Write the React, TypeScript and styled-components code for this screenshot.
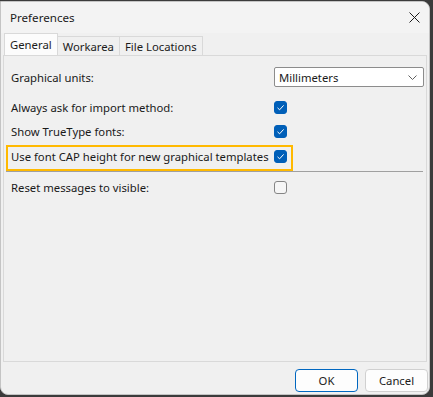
import React from "react";
import styled, { createGlobalStyle } from "styled-components";

const GlobalStyle = createGlobalStyle`
	html, body {
		margin: 0;
		padding: 0;
		background: #3b3b3b;
		width: 433px;
		height: 397px;
		overflow: hidden;
	}
	body {
		font-family: "Noto Sans", "Liberation Sans", sans-serif;
		font-size: 11.3px;
		color: #1a1a1a;
	}
`;

const Window = styled.div`
	margin-top: 1px;
	width: 430px;
	height: 394px;
	box-sizing: border-box;
	background: #f0f0f0;
	border: 1px solid #c4c4c4;
	border-radius: 0 8px 8px 8px;
	display: flex;
	flex-direction: column;
	overflow: hidden;
`;

const TitleBar = styled.div`
	height: 30px;
	flex: none;
	display: flex;
	align-items: center;
	justify-content: space-between;
	padding: 0 7px 1px 9px;
	background: #f3f3f3;
`;

const Title = styled.span`
	font-size: 11.6px;
	color: #1b1b1b;
`;

const CloseButton = styled.div`
	width: 16px;
	height: 16px;
	display: flex;
	align-items: center;
	justify-content: center;
`;

const TabStrip = styled.div`
	display: flex;
	align-items: flex-end;
	height: 22px;
	padding-left: 3px;
	flex: none;
`;

const Tab = styled.div<{ $active?: boolean }>`
	height: ${(p) => (p.$active ? "22px" : "19px")};
	box-sizing: border-box;
	padding: 0 5px;
	display: flex;
	align-items: center;
	background: ${(p) => (p.$active ? "#fcfcfc" : "#f0f0f0")};
	border: 1px solid #d9d9d9;
	border-bottom: none;
	margin-left: ${(p) => (p.$active ? "0" : "-1px")};
	position: relative;
	z-index: ${(p) => (p.$active ? 1 : 0)};
	color: #1b1b1b;
`;

const Panel = styled.div`
	flex: 1;
	margin: 0 2px;
	border: 1px solid #d9d9d9;
	display: flex;
	flex-direction: column;
	padding: 0 2px;
`;

const Row = styled.div<{ $top: number }>`
	margin-top: ${(p) => p.$top}px;
	height: 22px;
	display: flex;
	align-items: center;
	padding-left: 5px;
`;

const Highlight = styled.div`
	margin-top: 3px;
	width: 287px;
	height: 26px;
	box-sizing: border-box;
	border: 2px solid #ffb900;
	display: flex;
	align-items: center;
	padding: 0 4px 3px 3px;
`;

const Label = styled.span`
	width: 263px;
	flex: none;
	white-space: nowrap;
`;

const Separator = styled.div`
	height: 1px;
	background: #a0a0a0;
	margin-right: 1px;
`;

const Select = styled.div`
	width: 152px;
	height: 20px;
	box-sizing: border-box;
	background: #ffffff;
	border: 1px solid #8c8c8c;
	border-radius: 2px;
	display: flex;
	align-items: center;
	justify-content: space-between;
	padding: 0 6px 0 4px;
`;

const Check = styled.div<{ $checked?: boolean }>`
	width: 13px;
	height: 13px;
	box-sizing: border-box;
	border-radius: 3px;
	background: ${(p) => (p.$checked ? "#005fb8" : "#f6f6f6")};
	border: 1px solid ${(p) => (p.$checked ? "#005fb8" : "#858585")};
	display: flex;
	align-items: center;
	justify-content: center;
`;

const Footer = styled.div`
	height: 32px;
	flex: none;
	display: flex;
	align-items: flex-start;
	justify-content: flex-end;
	gap: 7px;
	padding: 7px 1px 0 0;
	box-sizing: border-box;
`;

const Button = styled.div<{ $primary?: boolean }>`
	width: 63px;
	height: 23px;
	box-sizing: border-box;
	border-radius: 4px;
	background: #fdfdfd;
	border: 1px solid ${(p) => (p.$primary ? "#0067c0" : "#d0d0d0")};
	display: flex;
	align-items: center;
	justify-content: center;
	color: #1b1b1b;
`;

const CheckBox = ({ checked }: { checked?: boolean }) => (
	<Check $checked={checked}>
		{checked && (
			<svg width="9" height="9" viewBox="0 0 9 9">
				<path d="M1.5 4.8 L3.6 6.8 L7.6 2.4" fill="none" stroke="#ffffff" strokeWidth="1" />
			</svg>
		)}
	</Check>
);

const App = () => {
	return (
		<>
			<GlobalStyle />
			<Window>
				<TitleBar>
					<Title>Preferences</Title>
					<CloseButton>
						<svg width="11" height="11" viewBox="0 0 11 11">
							<path d="M0.5 0.5 L10.5 10.5 M10.5 0.5 L0.5 10.5" stroke="#1b1b1b" strokeWidth="1" />
						</svg>
					</CloseButton>
				</TitleBar>
				<TabStrip>
					<Tab $active>General</Tab>
					<Tab>Workarea</Tab>
					<Tab>File Locations</Tab>
				</TabStrip>
				<Panel>
					<Row $top={10}>
						<Label>Graphical units:</Label>
						<Select>
							<span>Millimeters</span>
							<svg width="9" height="5" viewBox="0 0 9 5">
								<path d="M0.5 0.5 L4.5 4.5 L8.5 0.5" fill="none" stroke="#606060" strokeWidth="1" />
							</svg>
						</Select>
					</Row>
					<Row $top={8}>
						<Label>Always ask for import method:</Label>
						<CheckBox checked />
					</Row>
					<Row $top={2}>
						<Label>Show TrueType fonts:</Label>
						<CheckBox checked />
					</Row>
					<Highlight>
						<Label>Use font CAP height for new graphical templates</Label>
						<CheckBox checked />
					</Highlight>
					<Separator />
					<Row $top={4}>
						<Label>Reset messages to visible:</Label>
						<CheckBox />
					</Row>
				</Panel>
				<Footer>
					<Button $primary>OK</Button>
					<Button>Cancel</Button>
				</Footer>
			</Window>
		</>
	);
};

export default App;
